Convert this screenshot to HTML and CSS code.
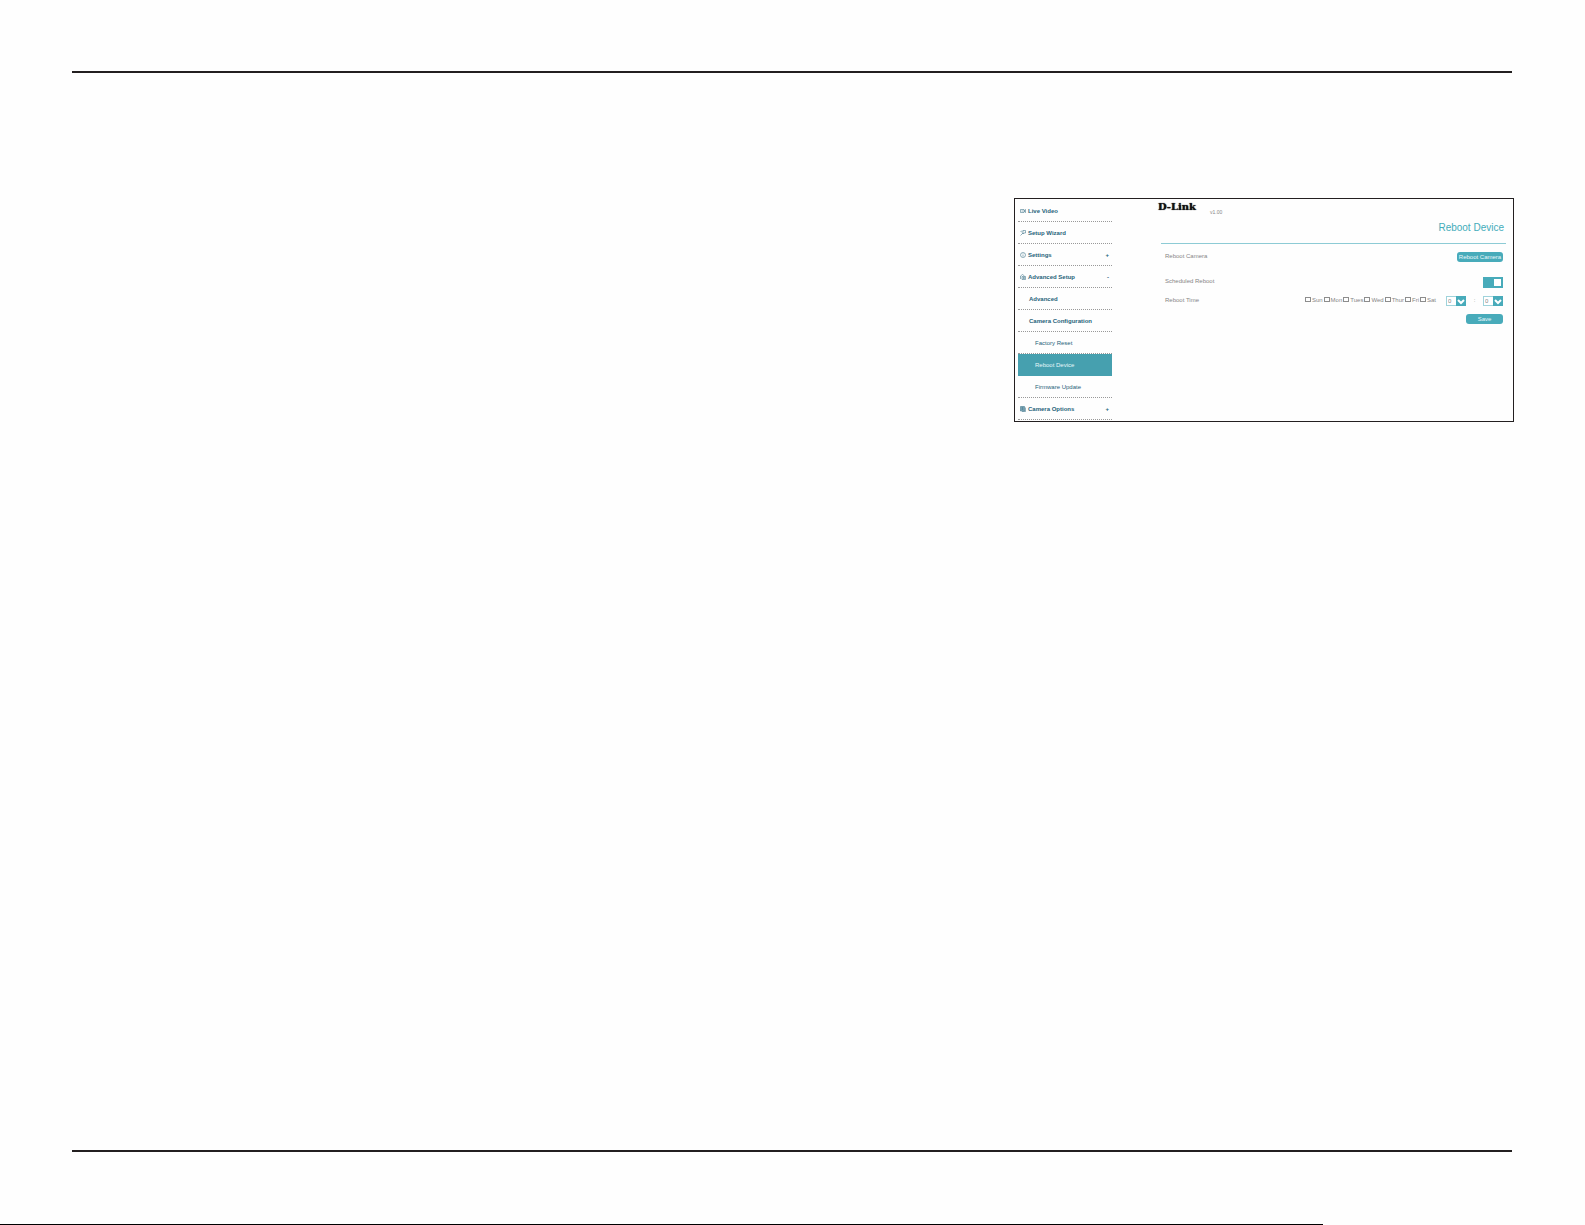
FILE: index.html
```html
<!DOCTYPE html>
<html lang="en">
<head>
  <meta charset="UTF-8" />
  <title>Reboot Device</title>
  <link rel="stylesheet" href="styles.css">
</head>
<body>

  <div class="page">
    <div class="panel">

      <!-- side menu -->
      <nav class="menu">
        <a href="#"><svg class="icon" viewBox="0 0 12 12"><path d="M1 3h7v6H1zM8 6l3-3v6zM3 6h3"/></svg>Live Video</a>
        <a href="#"><svg class="icon" viewBox="0 0 12 12"><path d="M1 11l5-5M1 2l3 3M4 1v2M6 1h5v5H8L6 8z"/></svg>Setup Wizard</a>
        <a href="#"><svg class="icon" viewBox="0 0 12 12"><circle cx="6" cy="6" r="5"/><path d="M6 3v1M6 5v4"/></svg>Settings<span class="sign">+</span></a>
        <a href="#"><svg class="icon" viewBox="0 0 12 12"><path d="M1 10V4l4-3 4 3M4 5h7v6H4zM6 7h3v2H6z"/></svg>Advanced Setup<span class="sign">-</span></a>
        <a href="#" class="sub">Advanced</a>
        <a href="#" class="sub">Camera Configuration</a>
        <a href="#" class="leaf">Factory Reset</a>
        <a href="#" class="leaf active">Reboot Device</a>
        <a href="#" class="leaf">Firmware Update</a>
        <a href="#"><svg class="icon" viewBox="0 0 12 12"><path class="fill" d="M1 1h8v9H1z"/><path d="M3 3h4M3 5h4M3 7h4M11 3v8H4"/></svg>Camera Options<span class="sign">+</span></a>
      </nav>

      <main class="content">
        <header class="top">
          <span class="logo">D-Link</span>
          <span class="version">v1.00</span>
        </header>

        <form class="settings">
          <h1>Reboot Device</h1>

          <div class="row">
            <span>Reboot Camera</span>
            <button type="button">Reboot Camera</button>
          </div>

          <div class="row spaced">
            <label for="scheduled">Scheduled Reboot</label>
            <input type="checkbox" id="scheduled" class="toggle" checked>
          </div>

          <div class="row">
            <span>Reboot Time</span>
            <div class="time">
              <div class="days">
                <label><input type="checkbox">Sun</label>
                <label><input type="checkbox">Mon</label>
                <label><input type="checkbox">Tues</label>
                <label><input type="checkbox">Wed</label>
                <label><input type="checkbox">Thur</label>
                <label><input type="checkbox">Fri</label>
                <label><input type="checkbox">Sat</label>
              </div>
              <div class="select">
                <select aria-label="Hour"><option>0</option></select>
                <svg viewBox="0 0 10 10"><path d="M2 4l3 3 3-3"/></svg>
              </div>
              <span class="colon">:</span>
              <div class="select">
                <select aria-label="Minute"><option>0</option></select>
                <svg viewBox="0 0 10 10"><path d="M2 4l3 3 3-3"/></svg>
              </div>
            </div>
          </div>

          <div class="row end">
            <button type="button" class="save">Save</button>
          </div>
        </form>
      </main>

    </div>
  </div>

  <div class="bottom"></div>

</body>
</html>
```

FILE: styles.css
```css
* {
  box-sizing: border-box;
}

body {
  margin: 0;
  min-height: 100vh;
  display: flex;
  flex-direction: column;
  background: #fefefe;
  font-family: "Liberation Sans", Arial, sans-serif;
  font-size: 6px;
  line-height: 8px;
  color: #868686;
}

.page {
  flex: 1;
  margin: 71px 73px 0 72px;
  padding-top: 125px;
  border-top: 2px solid #231f20;
  border-bottom: 2px solid #231f20;
}

.panel {
  width: 500px;
  margin: 0 -2px 0 auto;
  padding: 0 7px 0 3px;
  border: 1px solid #231f20;
  display: flex;
  gap: 46px;
}

/* side menu */
.menu {
  width: 94px;
  padding: 1px 0;
}

.menu a {
  display: flex;
  align-items: center;
  height: 22px;
  padding: 1px 3px 0 2px;
  border-bottom: 1px dotted #999;
  color: #27637a;
  font-weight: bold;
  text-decoration: none;
}

.menu .sub {
  padding-left: 11px;
}

.menu .leaf {
  padding-left: 17px;
  font-weight: normal;
}

.menu .active {
  background: #46a0af;
  border-color: #46a0af;
  color: #e6f7fa;
}

.icon {
  width: 6px;
  height: 6px;
  margin-right: 2px;
  fill: none;
  stroke: #27637a;
}

.icon .fill {
  fill: #8fb4c2;
}

.sign {
  margin-left: auto;
}

/* right side */
.content {
  flex: 1;
}

.top {
  display: flex;
  height: 16px;
  gap: 14px;
}

.logo {
  padding-top: 1px;
  font-family: "DejaVu Serif", serif;
  font-size: 10px;
  line-height: 13px;
  font-weight: bold;
  color: #111;
  text-shadow: 0 0 1px #111;
}

.version {
  padding-top: 9px;
  font-size: 5px;
}

.settings {
  margin-left: 3px;
}

h1 {
  margin: 0;
  padding: 0 2px 2px 0;
  border-bottom: 1px solid #8dcbd5;
  font-size: 10px;
  line-height: 26px;
  font-weight: normal;
  text-align: right;
  color: #43acba;
}

.row {
  display: flex;
  justify-content: space-between;
  align-items: flex-start;
  margin-top: 8px;
  padding: 0 3px 0 4px;
}

.spaced {
  margin-top: 15px;
}

.end {
  justify-content: flex-end;
}

button {
  width: 46px;
  height: 10px;
  padding: 0;
  border: none;
  border-radius: 3px;
  background: #48abba;
  color: #e9f8fa;
  font: inherit;
  cursor: pointer;
}

.save {
  width: 37px;
}

input {
  appearance: none;
  margin: 0;
}

.toggle {
  display: flex;
  justify-content: flex-end;
  width: 20px;
  height: 11px;
  padding: 1px;
  border: 1px solid #48abba;
  background: #48abba;
}

.toggle::before {
  content: "";
  width: 7px;
  background: #fff;
}

.toggle:not(:checked) {
  justify-content: flex-start;
}

.time,
.days,
.days label {
  display: flex;
}

.days {
  gap: 1px;
  margin-right: 10px;
}

.days label {
  gap: 1px;
}

.days input {
  width: 6px;
  height: 5px;
  margin-top: 1px;
  border: 1px solid #8d8d8d;
}

.colon {
  width: 17px;
  text-align: center;
}

.select {
  position: relative;
  width: 20px;
  height: 10px;
}

select {
  appearance: none;
  display: block;
  width: 100%;
  height: 100%;
  padding: 0 1px;
  border: 1px solid #9fd3db;
  border-radius: 0;
  background: #fff;
  color: #868686;
  font: inherit;
}

.select svg {
  position: absolute;
  top: 0;
  right: 0;
  width: 10px;
  height: 10px;
  background: #48abba;
  fill: none;
  stroke: #fff;
  stroke-width: 2;
  pointer-events: none;
}

.bottom {
  width: 83.5%;
  height: 73px;
  border-bottom: 1px solid #000;
}
```
